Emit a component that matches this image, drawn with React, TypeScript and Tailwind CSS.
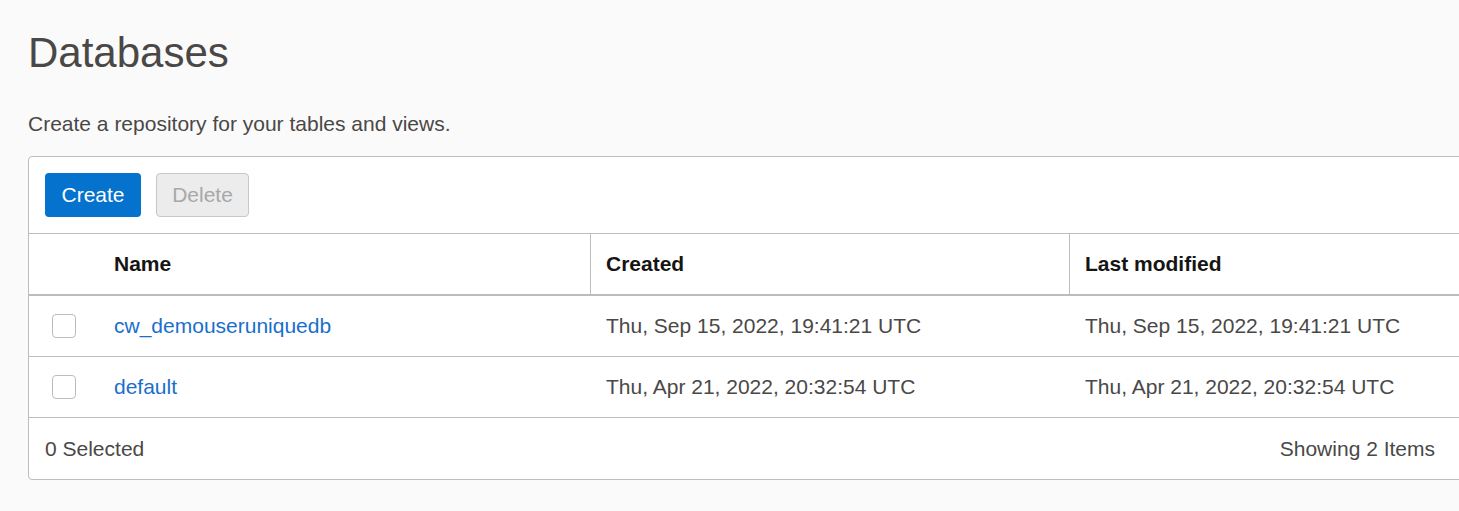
import React from "react";

const rows = [
  {
    name: "cw_demouseruniquedb",
    created: "Thu, Sep 15, 2022, 19:41:21 UTC",
    modified: "Thu, Sep 15, 2022, 19:41:21 UTC",
  },
  {
    name: "default",
    created: "Thu, Apr 21, 2022, 20:32:54 UTC",
    modified: "Thu, Apr 21, 2022, 20:32:54 UTC",
  },
];

export default function App() {
  return (
    <div
      className="w-[1459px] h-[511px] overflow-hidden bg-[#fbfafa] text-[#4a4847]"
      style={{ fontFamily: '"Liberation Sans", Arial, sans-serif' }}
    >
      <div className="pl-[28px] pt-[28px]">
        <h1 className="text-[42px] leading-[50px] text-[#4a4847] font-normal">
          Databases
        </h1>
        <p className="mt-[34px] text-[21px] leading-[24px]">
          Create a repository for your tables and views.
        </p>
        <div className="mt-[20px] w-[1450px] rounded-[4px] border border-[#bdbdbf] bg-white">
          <div className="flex gap-[15px] p-[16px]">
            <button className="h-[44px] w-[96px] rounded-[4px] bg-[#0572ce] text-[21px] text-white">
              Create
            </button>
            <button className="h-[44px] w-[93px] rounded-[4px] border border-[#c8c8c9] bg-[#ececec] text-[21px] text-[#a8a8a8]">
              Delete
            </button>
          </div>
          <div className="grid grid-cols-[69px_492px_479px_1fr] border-t border-[#bdbdbf] border-b-2 border-b-[#bcbcbf]">
            <div className="h-[60px]" />
            <div className="flex h-[60px] items-center pl-[16px] text-[21px] font-bold text-[#161513]">
              Name
            </div>
            <div className="flex h-[60px] items-center border-l border-[#bdbdbf] pl-[15px] text-[21px] font-bold text-[#161513]">
              Created
            </div>
            <div className="flex h-[60px] items-center border-l border-[#bdbdbf] pl-[15px] text-[21px] font-bold text-[#161513]">
              Last modified
            </div>
          </div>
          {rows.map((r) => (
            <div
              key={r.name}
              className="grid grid-cols-[69px_492px_479px_1fr] border-b border-[#bdbdbf] text-[21px]"
            >
              <div className="flex h-[60px] items-center pl-[23px]">
                <div className="h-[24px] w-[24px] rounded-[4px] border border-[#bcbcbf] bg-white" />
              </div>
              <div className="flex h-[60px] items-center pl-[16px]">
                <a className="text-[#1a6ecc]">{r.name}</a>
              </div>
              <div className="flex h-[60px] items-center pl-[16px]">
                {r.created}
              </div>
              <div className="flex h-[60px] items-center pl-[16px]">
                {r.modified}
              </div>
            </div>
          ))}
          <div className="flex h-[61px] items-center justify-between pl-[16px] pr-[42px] text-[21px]">
            <span>0 Selected</span>
            <span>Showing 2 Items</span>
          </div>
        </div>
      </div>
    </div>
  );
}
